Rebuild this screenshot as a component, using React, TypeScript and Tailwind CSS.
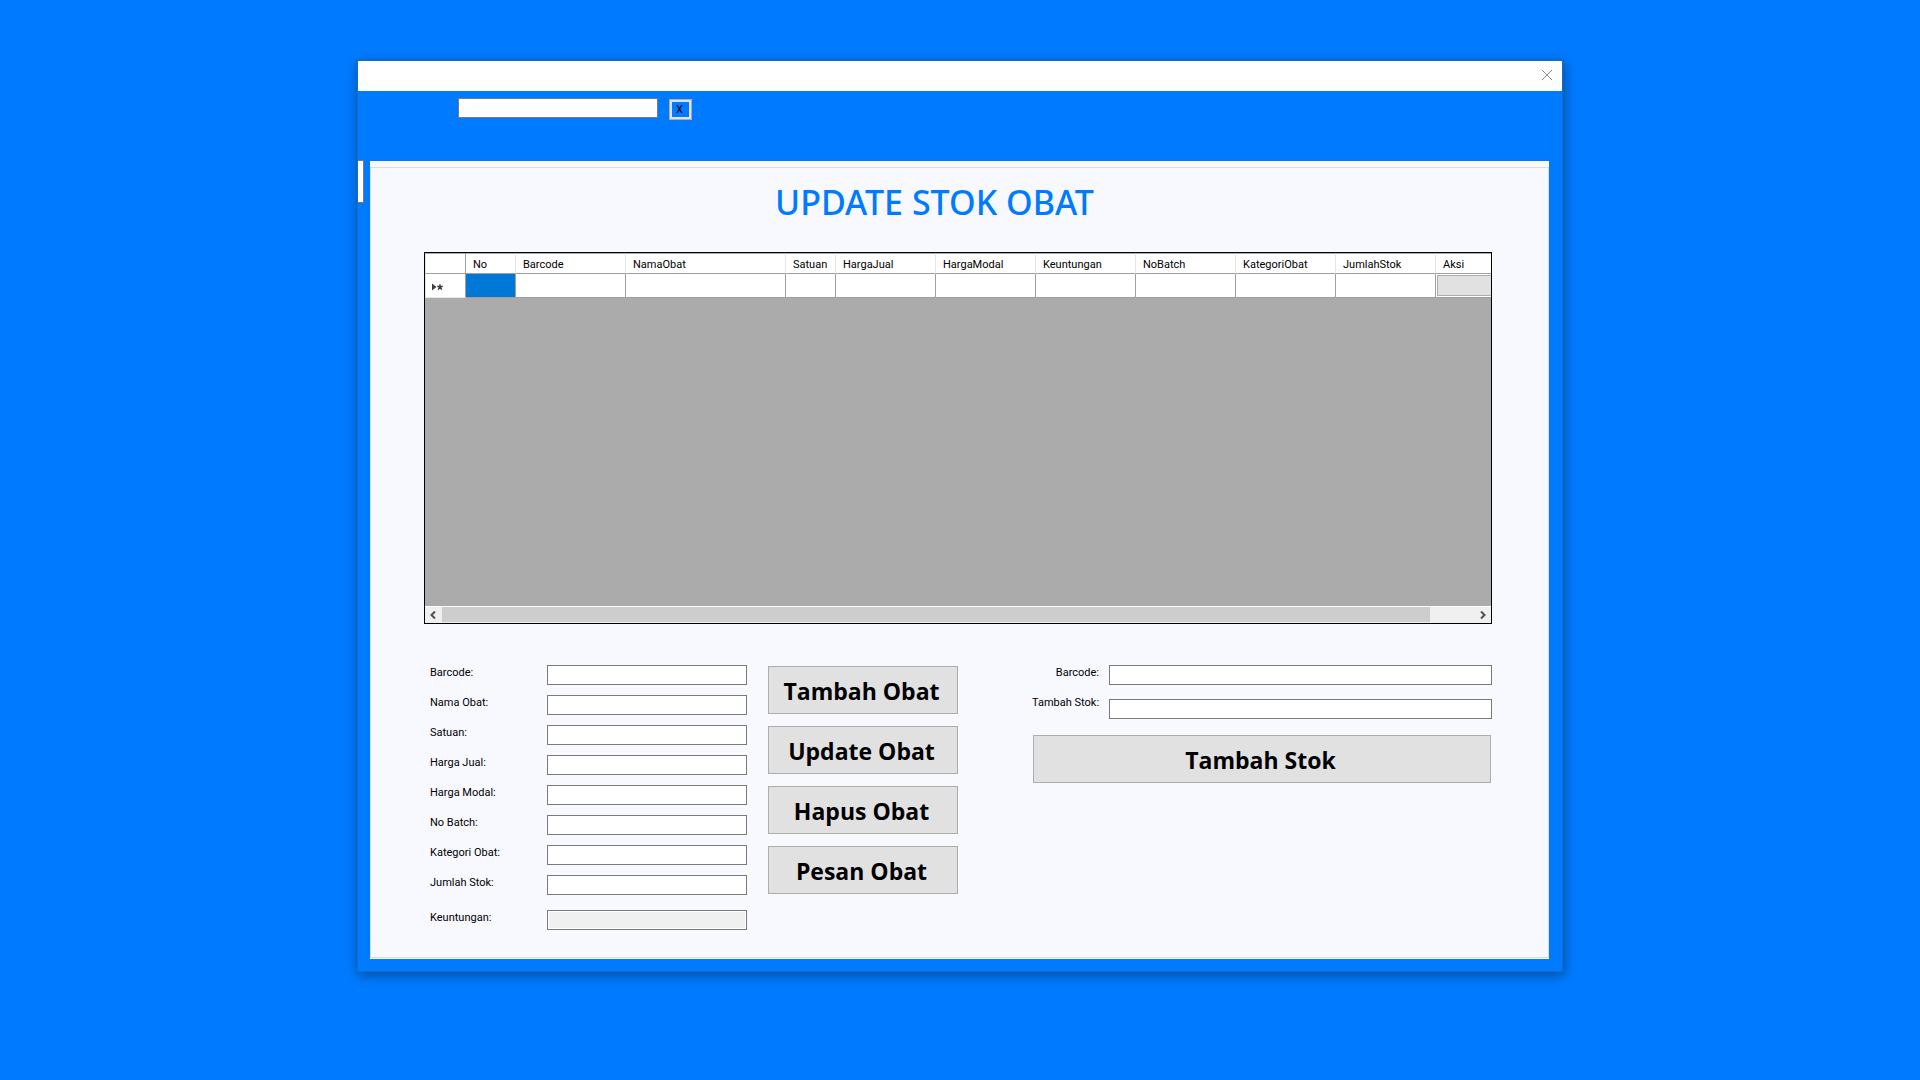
import React from "react";

const columns = [
  { name: "No", width: "w-[50px]" },
  { name: "Barcode", width: "w-[110px]" },
  { name: "NamaObat", width: "w-[160px]" },
  { name: "Satuan", width: "w-[50px]" },
  { name: "HargaJual", width: "w-[100px]" },
  { name: "HargaModal", width: "w-[100px]" },
  { name: "Keuntungan", width: "w-[100px]" },
  { name: "NoBatch", width: "w-[100px]" },
  { name: "KategoriObat", width: "w-[100px]" },
  { name: "JumlahStok", width: "w-[100px]" },
];

const fields = [
  { id: "barcode", label: "Barcode:" },
  { id: "nama", label: "Nama Obat:" },
  { id: "satuan", label: "Satuan:" },
  { id: "harga-jual", label: "Harga Jual:" },
  { id: "harga-modal", label: "Harga Modal:" },
  { id: "no-batch", label: "No Batch:" },
  { id: "kategori", label: "Kategori Obat:" },
  { id: "jumlah", label: "Jumlah Stok:" },
];

const actions = ["Tambah Obat", "Update Obat", "Hapus Obat", "Pesan Obat"];

const inputClass =
  "h-5 border border-[#7a7a7a] bg-white px-1 text-[11px] outline-none";
const labelClass = "leading-4 whitespace-nowrap";
const buttonClass =
  "h-12 border border-[#adadad] bg-[#e1e1e1] pt-px pr-[3px] font-['Open_Sans',sans-serif] text-[23px] leading-8 font-bold whitespace-nowrap";

function StockTable() {
  return (
    <div className="ml-[53px] mr-14 overflow-hidden border border-black bg-[#ababab]">
      <div className="h-[353px] overflow-hidden">
        <table className="w-full table-fixed border-separate border-spacing-0 bg-white">
          <thead>
            <tr className="h-[21px] text-left">
              <th
                aria-label="Baris"
                className="w-[41px] border-t border-r border-b border-l border-[#a0a0a0] border-t-[#ababab] border-l-[#e5e5e5]"
              />
              {columns.map((c) => (
                <th
                  key={c.name}
                  className={`${c.width} border-t border-r border-b border-t-[#ababab] border-r-[#e5e5e5] border-b-[#a0a0a0] p-0 pt-[3px] pl-[7px] leading-4 font-normal`}
                >
                  {c.name}
                </th>
              ))}
              <th className="border-t border-b border-t-[#ababab] border-b-[#a0a0a0] p-0 pt-[3px] pl-[7px] leading-4 font-normal">
                Aksi
              </th>
            </tr>
          </thead>
          <tbody>
            <tr className="h-6">
              <td className="border-r border-b border-l border-[#e5e5e5] border-r-[#a0a0a0] p-0 pt-[2px] pl-[6px]">
                <svg width="12" height="8" viewBox="0 0 12 8" aria-hidden="true">
                  <path d="M0 0.5 L4.5 4 L0 7.5 Z" fill="#404040" />
                  <path
                    d="M8 1.2 V4 M5.3 3.2 L8 4 M10.7 3.2 L8 4 M6.2 6.6 L8 4 M9.8 6.6 L8 4"
                    stroke="#404040"
                    strokeWidth="1.5"
                  />
                </svg>
              </td>
              {columns.map((c) => (
                <td
                  key={c.name}
                  className="border-r border-b border-[#a0a0a0] p-0 nth-2:bg-[#0078d7]"
                />
              ))}
              <td className="border-b border-[#a0a0a0] p-0 pb-px pl-px">
                <button
                  type="button"
                  aria-label="Aksi"
                  className="block h-[21px] w-full border border-r-0 border-[#adadad] bg-[#e1e1e1]"
                />
              </td>
            </tr>
          </tbody>
        </table>
      </div>
      <div className="flex h-[17px] border-y border-t-white border-b-[#f0f0f0] bg-[#f0f0f0]">
        <button
          type="button"
          aria-label="Gulir kiri"
          className="flex w-[17px] items-center justify-center pr-px"
        >
          <svg width="6" height="8" viewBox="0 0 6 8" fill="none" stroke="#505050" strokeWidth="2">
            <path d="M5 0.5 L1.5 4 L5 7.5" />
          </svg>
        </button>
        <div className="flex flex-1 pr-11">
          <div className="flex-1 bg-[#cdcdcd]" />
        </div>
        <button
          type="button"
          aria-label="Gulir kanan"
          className="flex w-[17px] items-center justify-center"
        >
          <svg width="6" height="8" viewBox="0 0 6 8" fill="none" stroke="#505050" strokeWidth="2">
            <path d="M1 0.5 L4.5 4 L1 7.5" />
          </svg>
        </button>
      </div>
    </div>
  );
}

export default function App() {
  return (
    <div className="min-h-screen bg-[#007bff] pt-[60px] font-[Roboto,sans-serif] text-[11px] text-black">
      <main className="mx-auto w-full max-w-[1206px] border border-[#1b6bbd] bg-[#007bff] pb-3 shadow-[1px_3px_12px_rgba(0,0,0,0.4)]">
        <header className="flex h-[30px] items-center justify-end bg-white pr-[10px]">
          <button type="button" aria-label="Tutup" className="pb-[2px]">
            <svg width="10" height="10" viewBox="0 0 10 10" fill="none" stroke="#8c8c8c">
              <path d="M0 0 L10 10 M10 0 L0 10" />
            </svg>
          </button>
        </header>
        <div className="flex h-[69px] items-start gap-[11px] pt-[7px] pl-[100px]">
          <input aria-label="Cari" className={`${inputClass} w-[200px]`} />
          <button
            type="button"
            className="mt-px flex h-[21px] w-[23px] border border-[#adadad] bg-[#e1e1e1] p-[2px]"
          >
            <span className="w-full bg-[#007bff] pr-[2px] leading-[15px]">X</span>
          </button>
        </div>
        <div className="flex items-start pr-[13px]">
          <input
            aria-label="Menu"
            className="h-[43px] w-[6px] border border-l-0 border-[#7a7a7a] bg-white outline-none"
          />
          <section className="mt-px ml-[6px] min-w-0 flex-1 bg-[#f8f9ff] pt-[6px] pb-px">
            <div className="border border-[#dcdcdc] pb-[27px]">
              <h1 className="pt-[9px] pr-[50px] pb-[25px] text-center font-['Noto_Sans',sans-serif] text-[34px] leading-[50px] font-medium text-[#007bff]">
                UPDATE STOK OBAT
              </h1>
              <StockTable />
              <div className="mt-[41px] mr-14 ml-[59px] flex items-start">
                <form className="flex flex-col gap-[10px]">
                  {fields.map((f) => (
                    <div key={f.id} className="flex">
                      <label htmlFor={f.id} className={`${labelClass} w-[117px]`}>
                        {f.label}
                      </label>
                      <input id={f.id} className={`${inputClass} w-[200px]`} />
                    </div>
                  ))}
                  <div className="mt-[5px] flex">
                    <label htmlFor="keuntungan" className={`${labelClass} w-[117px]`}>
                      Keuntungan:
                    </label>
                    <input
                      id="keuntungan"
                      readOnly
                      className="h-5 w-[200px] border border-[#7a7a7a] bg-[#f0f0f0] px-1 shadow-[inset_0_0_0_1px_white] outline-none"
                    />
                  </div>
                </form>
                <div className="mt-px ml-[21px] flex w-[190px] flex-col gap-3">
                  {actions.map((a) => (
                    <button key={a} type="button" className={buttonClass}>
                      {a}
                    </button>
                  ))}
                </div>
                <form className="ml-[74px] flex min-w-0 flex-1 flex-col">
                  <div className="flex gap-[10px]">
                    <label htmlFor="stok-barcode" className={`${labelClass} w-[67px] text-right`}>
                      Barcode:
                    </label>
                    <input id="stok-barcode" className={`${inputClass} min-w-0 flex-1`} />
                  </div>
                  <div className="mt-[10px] flex gap-[10px]">
                    <label htmlFor="stok-tambah" className={`${labelClass} w-[67px] text-right`}>
                      Tambah Stok:
                    </label>
                    <input id="stok-tambah" className={`${inputClass} mt-1 min-w-0 flex-1`} />
                  </div>
                  <button type="button" className={`${buttonClass} mt-4 mr-px ml-px`}>
                    Tambah Stok
                  </button>
                </form>
              </div>
            </div>
          </section>
        </div>
      </main>
    </div>
  );
}
